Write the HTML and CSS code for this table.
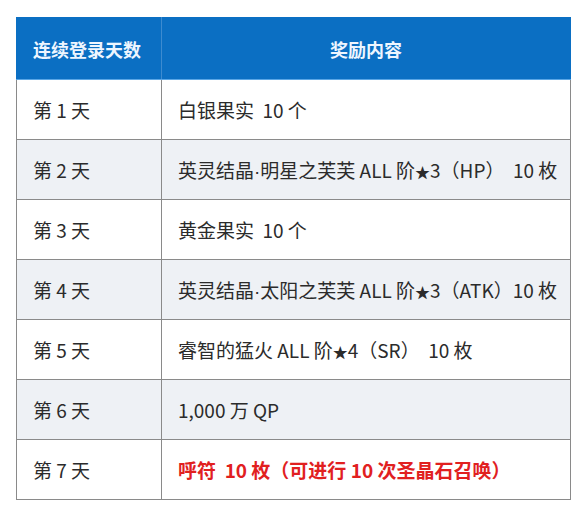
FILE: index.html
```html
<!DOCTYPE html>
<html lang="zh-CN">
<head>
<meta charset="utf-8">
<link rel="stylesheet" href="styles.css">
</head>
<body>
<table class="rewards">
  <thead>
    <tr><th class="day">连续登录天数</th><th class="reward">奖励内容</th></tr>
  </thead>
  <tbody>
    <tr><td class="day">第 1 天</td><td>白银果实&nbsp; 10 个</td></tr>
    <tr class="alt"><td class="day">第 2 天</td><td>英灵结晶<span class="dot">·</span>明星之芙芙 ALL 阶<span class="star">★</span>3（HP）&nbsp; 10 枚</td></tr>
    <tr><td class="day">第 3 天</td><td>黄金果实&nbsp; 10 个</td></tr>
    <tr class="alt"><td class="day">第 4 天</td><td>英灵结晶<span class="dot">·</span>太阳之芙芙 ALL 阶<span class="star">★</span>3（ATK）10 枚</td></tr>
    <tr><td class="day">第 5 天</td><td>睿智的猛火 ALL 阶<span class="star">★</span>4（SR）&nbsp; 10 枚</td></tr>
    <tr class="alt"><td class="day">第 6 天</td><td>1,000 万 QP</td></tr>
    <tr><td class="day">第 7 天</td><td class="hot">呼符&nbsp; 10 枚（可进行 10 次圣晶石召唤）</td></tr>
  </tbody>
</table>
</body>
</html>
```
FILE: styles.css
```css
html, body {
  margin: 0;
  background: #ffffff;
}
body {
  padding: 17px 0 0 16px;
  font-family: "Noto Sans CJK SC", "Noto Sans", sans-serif;
}
.rewards {
  width: 555px;
  border-collapse: collapse;
  table-layout: fixed;
  font-size: 19px;
  color: #2b2b2b;
}
.rewards th {
  background: #0b6fc3;
  color: #eef6ff;
  font-weight: bold;
  font-size: 18px;
  height: 61px;
  padding: 0 16px;
  border: 1px solid #0b6fc3;
  border-bottom: 1px solid #5aa6e6;
}
.rewards th.day {
  width: 112px;
  text-align: left;
  border-right: 1px solid #3d8bd0;
}
.rewards th.reward {
  text-align: center;
}
.rewards td {
  height: 59px;
  padding: 0 16px;
  border: 1px solid #8a8a8a;
  white-space: nowrap;
}
.dot {
  font-family: "Liberation Sans", sans-serif;
}
.star {
  font-size: 15px;
}
.rewards tr.alt td {
  background: #eef1f5;
}
.rewards td.hot {
  color: #e1201f;
  font-weight: bold;
}
```
